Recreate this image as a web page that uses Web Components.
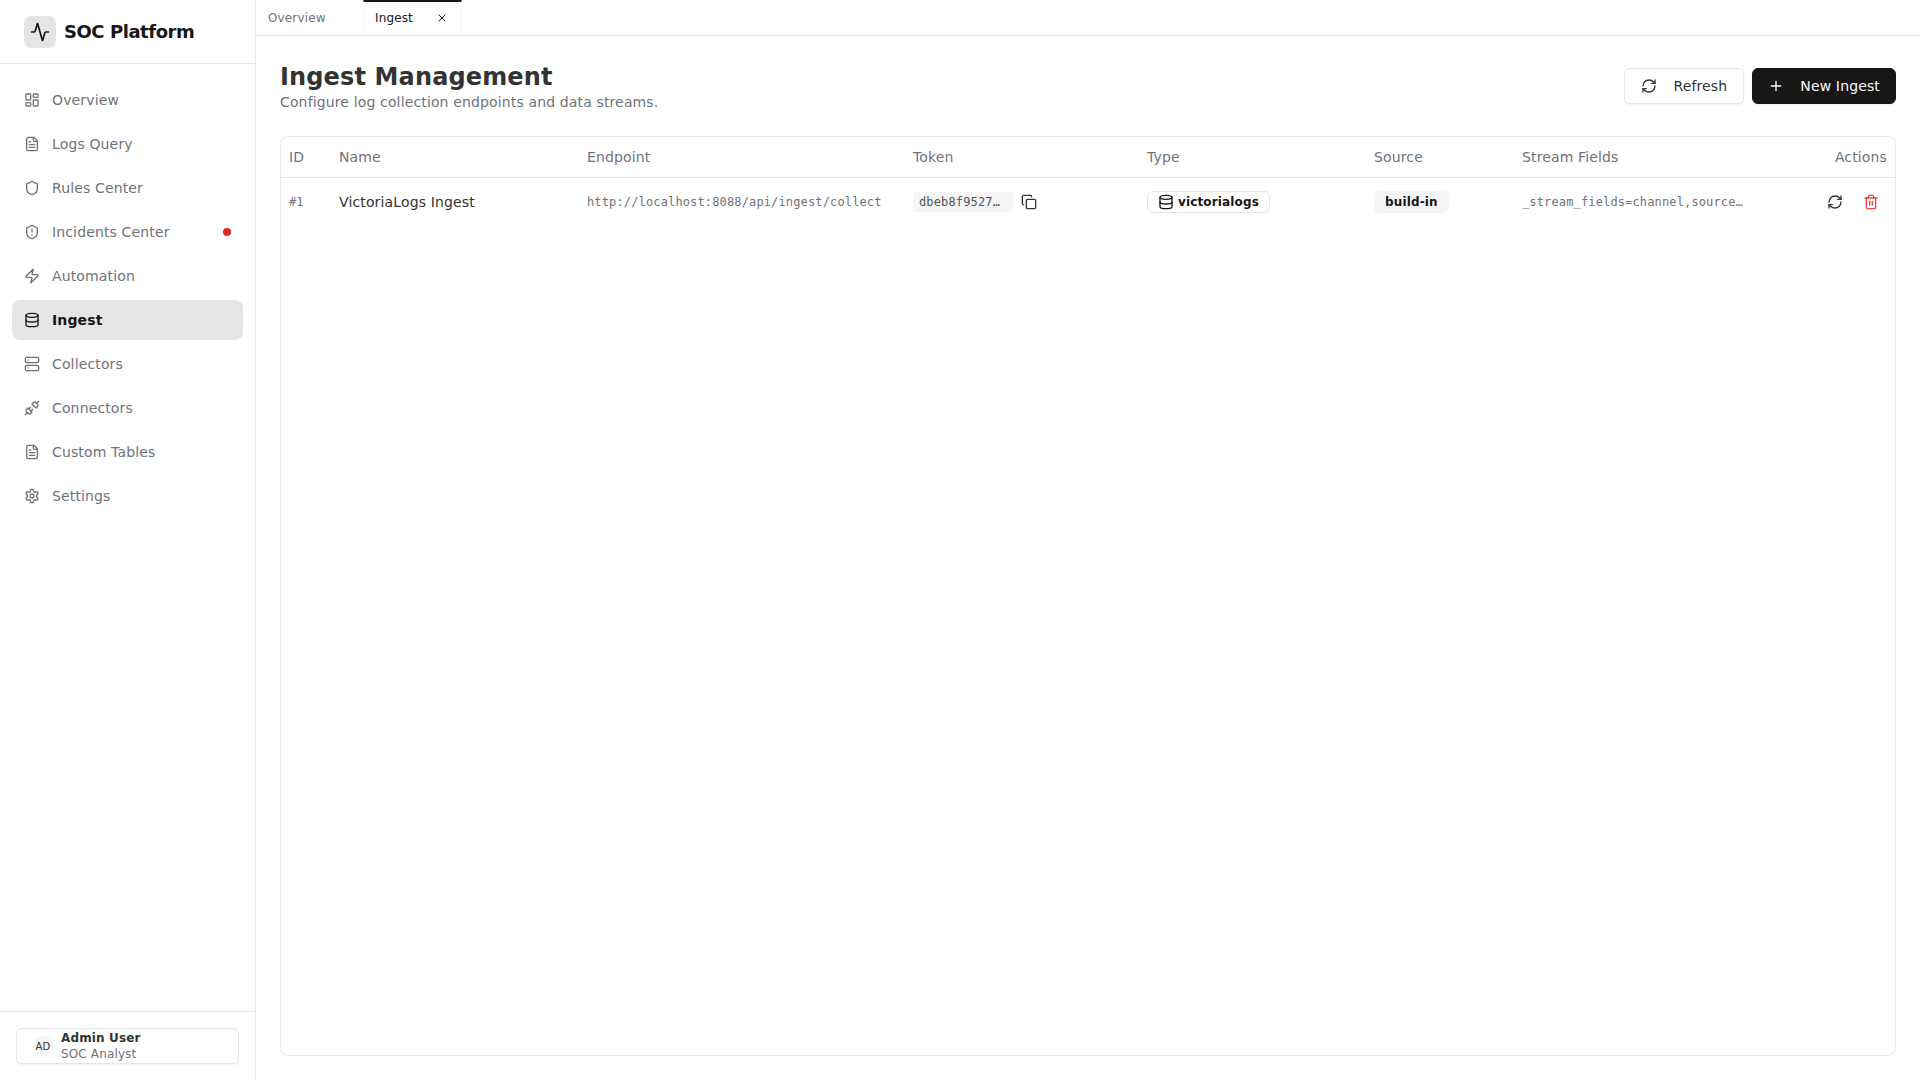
<!DOCTYPE html>
<html><head><meta charset="utf-8"><title>Ingest Management</title>
<style>
html,body{margin:0;height:100%;background:#fff;overflow:hidden}
body{font-family:"DejaVu Sans",sans-serif;color:#27272a;letter-spacing:.14px}
</style></head><body>
<soc-app>
  <soc-sidebar slot="side">
    <soc-nav-item icon="dashboard">Overview</soc-nav-item>
    <soc-nav-item icon="file">Logs Query</soc-nav-item>
    <soc-nav-item icon="shield">Rules Center</soc-nav-item>
    <soc-nav-item icon="shieldalert" dot>Incidents Center</soc-nav-item>
    <soc-nav-item icon="zap">Automation</soc-nav-item>
    <soc-nav-item icon="database" active>Ingest</soc-nav-item>
    <soc-nav-item icon="server">Collectors</soc-nav-item>
    <soc-nav-item icon="unplug">Connectors</soc-nav-item>
    <soc-nav-item icon="file">Custom Tables</soc-nav-item>
    <soc-nav-item icon="settings">Settings</soc-nav-item>
  </soc-sidebar>
  <soc-tabs slot="tabs"></soc-tabs>
  <soc-ingest-page></soc-ingest-page>
</soc-app>
<script>
const P={
activity:'<path d="M22 12h-2.48a2 2 0 0 0-1.93 1.46l-2.35 8.36a.25.25 0 0 1-.48 0L9.24 2.18a.25.25 0 0 0-.48 0l-2.35 8.36A2 2 0 0 1 4.49 12H2"/>',
dashboard:'<rect width="7" height="9" x="3" y="3" rx="1"/><rect width="7" height="5" x="14" y="3" rx="1"/><rect width="7" height="9" x="14" y="12" rx="1"/><rect width="7" height="5" x="3" y="16" rx="1"/>',
file:'<path d="M15 2H6a2 2 0 0 0-2 2v16a2 2 0 0 0 2 2h12a2 2 0 0 0 2-2V7Z"/><path d="M14 2v4a2 2 0 0 0 2 2h4"/><path d="M10 9H8"/><path d="M16 13H8"/><path d="M16 17H8"/>',
shield:'<path d="M20 13c0 5-3.5 7.5-7.66 8.95a1 1 0 0 1-.67-.01C7.5 20.5 4 18 4 13V6a1 1 0 0 1 1-1c2 0 4.5-1.2 6.24-2.72a1.17 1.17 0 0 1 1.52 0C14.51 3.81 17 5 19 5a1 1 0 0 1 1 1z"/>',
shieldalert:'<path d="M20 13c0 5-3.5 7.5-7.66 8.95a1 1 0 0 1-.67-.01C7.5 20.5 4 18 4 13V6a1 1 0 0 1 1-1c2 0 4.5-1.2 6.24-2.72a1.17 1.17 0 0 1 1.52 0C14.51 3.81 17 5 19 5a1 1 0 0 1 1 1z"/><path d="M12 8v4"/><path d="M12 16h.01"/>',
zap:'<path d="M4 14a1 1 0 0 1-.78-1.63l9.9-10.2a.5.5 0 0 1 .86.46l-1.92 6.02A1 1 0 0 0 13 10h7a1 1 0 0 1 .78 1.63l-9.9 10.2a.5.5 0 0 1-.86-.46l1.92-6.02A1 1 0 0 0 11 14z"/>',
database:'<ellipse cx="12" cy="5" rx="9" ry="3"/><path d="M3 5V19A9 3 0 0 0 21 19V5"/><path d="M3 12A9 3 0 0 0 21 12"/>',
server:'<rect width="20" height="8" x="2" y="2" rx="2"/><rect width="20" height="8" x="2" y="14" rx="2"/><path d="M6 6h.01"/><path d="M6 18h.01"/>',
unplug:'<path d="m19 5 3-3"/><path d="m2 22 3-3"/><path d="M6.3 20.3a2.4 2.4 0 0 0 3.4 0L12 18l-6-6-2.3 2.3a2.4 2.4 0 0 0 0 3.4Z"/><path d="M7.5 13.5 10 11"/><path d="M10.5 16.5 13 14"/><path d="m12 6 6 6 2.3-2.3a2.4 2.4 0 0 0 0-3.4l-2.6-2.6a2.4 2.4 0 0 0-3.4 0Z"/>',
settings:'<path d="M12.22 2h-.44a2 2 0 0 0-2 2v.18a2 2 0 0 1-1 1.73l-.43.25a2 2 0 0 1-2 0l-.15-.08a2 2 0 0 0-2.73.73l-.22.38a2 2 0 0 0 .73 2.73l.15.1a2 2 0 0 1 1 1.72v.51a2 2 0 0 1-1 1.74l-.15.09a2 2 0 0 0-.73 2.73l.22.38a2 2 0 0 0 2.73.73l.15-.08a2 2 0 0 1 2 0l.43.25a2 2 0 0 1 1 1.73V20a2 2 0 0 0 2 2h.44a2 2 0 0 0 2-2v-.18a2 2 0 0 1 1-1.73l.43-.25a2 2 0 0 1 2 0l.15.08a2 2 0 0 0 2.73-.73l.22-.39a2 2 0 0 0-.73-2.73l-.15-.08a2 2 0 0 1-1-1.74v-.5a2 2 0 0 1 1-1.74l.15-.09a2 2 0 0 0 .73-2.73l-.22-.38a2 2 0 0 0-2.73-.73l-.15.08a2 2 0 0 1-2 0l-.43-.25a2 2 0 0 1-1-1.73V4a2 2 0 0 0-2-2z"/><circle cx="12" cy="12" r="3"/>',
refresh:'<path d="M3 12a9 9 0 0 1 9-9 9.75 9.75 0 0 1 6.74 2.74L21 8"/><path d="M21 3v5h-5"/><path d="M21 12a9 9 0 0 1-9 9 9.75 9.75 0 0 1-6.74-2.74L3 16"/><path d="M8 16H3v5"/>',
copy:'<rect width="14" height="14" x="8" y="8" rx="2" ry="2"/><path d="M4 16c-1.1 0-2-.9-2-2V4c0-1.1.9-2 2-2h10c1.1 0 2 .9 2 2"/>',
trash:'<path d="M3 6h18"/><path d="M19 6v14c0 1-1 2-2 2H7c-1 0-2-1-2-2V6"/><path d="M8 6V4c0-1 1-2 2-2h4c1 0 2 1 2 2v2"/><line x1="10" x2="10" y1="11" y2="17"/><line x1="14" x2="14" y1="11" y2="17"/>',
plus:'<path d="M5 12h14"/><path d="M12 5v14"/>',
x:'<path d="M18 6 6 18"/><path d="m6 6 12 12"/>'
};
function def(name,css,html,init){
  customElements.define(name,class extends HTMLElement{
    constructor(){super();const r=this.attachShadow({mode:'open'});
      r.innerHTML='<style>'+css+'</style>'+(typeof html==='function'?html(this):html);}
    connectedCallback(){const r=this.shadowRoot; if(init)init(this,r);}
  });
}
def('soc-icon',':host{display:inline-flex;flex:none;width:var(--s,16px);height:var(--s,16px)}svg{width:100%;height:100%;display:block;fill:none;stroke:currentColor;stroke-width:2;stroke-linecap:round;stroke-linejoin:round}',
 '<svg viewBox="0 0 24 24"></svg>',(h,r)=>{r.querySelector('svg').innerHTML=P[h.getAttribute('name')]||'';});

def('soc-app',':host{display:flex;width:1920px;height:1080px}.side{flex:none;width:256px}.main{flex:1;min-width:0;display:flex;flex-direction:column}',
 '<div class="side"><slot name="side"></slot></div><div class="main"><slot name="tabs"></slot><slot></slot></div>');

def('soc-sidebar',`:host{display:flex;flex-direction:column;height:1080px;box-sizing:border-box;border-right:1px solid #e5e5e5;background:#fff}
.brand{height:64px;box-sizing:border-box;border-bottom:1px solid #e5e5e5;display:flex;align-items:center;gap:8px;padding:0 24px}
.logo{width:32px;height:32px;border-radius:8px;background:#e5e5e5;display:flex;align-items:center;justify-content:center;color:#171717;--s:20px}
.name{font-size:18px;font-weight:700;color:#171717;letter-spacing:-.45px}
nav{flex:1;display:flex;flex-direction:column;gap:4px;padding:16px 12px}
.foot{border-top:1px solid #e5e5e5;padding:16px;height:69px;box-sizing:border-box}`,
`<div class="brand"><div class="logo"><soc-icon name="activity"></soc-icon></div><div class="name">SOC Platform</div></div>
<nav><slot></slot></nav><div class="foot"><soc-user></soc-user></div>`);

def('soc-nav-item',`:host{display:flex;align-items:center;gap:12px;height:40px;padding:0 12px;border-radius:8px;font-size:14px;color:#71717a;position:relative}
:host([active]){background:#e5e5e5;color:#171717;font-weight:700}
.dot{position:absolute;right:12px;top:50%;margin-top:-4px;width:8px;height:8px;border-radius:50%;background:#dc2626;display:none}
:host([dot]) .dot{display:block}`,
 h=>`<soc-icon name="${h.getAttribute('icon')}"></soc-icon><span><slot></slot></span><i class="dot"></i>`);

def('soc-user',`:host{display:flex;align-items:center;gap:8px;height:36px;box-sizing:border-box;border:1px solid #e5e5e5;border-radius:6px;padding:0 16px;box-shadow:0 1px 2px rgba(0,0,0,.05);background:#fff}
.av{width:20px;height:20px;border-radius:50%;background:#f5f5f5;font-size:10px;color:#333;display:flex;align-items:center;justify-content:center;flex:none}
.t{line-height:16px;font-size:12px}.n{font-weight:700;color:#333}.r{color:#71717a}`,
 `<div class="av">AD</div><div class="t"><div class="n">Admin User</div><div class="r">SOC Analyst</div></div>`);

def('soc-tabs',`:host{display:flex;height:36px;box-sizing:border-box;border-bottom:1px solid #e5e5e5;font-size:12px;flex:none}
.tab{display:flex;align-items:center;box-sizing:border-box;height:35px}
.a{width:107px;padding-left:12px;color:#71717a}
.b{width:99px;padding:0 12px 0 11px;color:#171717;border-top:2px solid #171717;border-left:1px solid #f5f5f5;border-right:1px solid #f5f5f5;justify-content:space-between;--s:12px}
.b span{margin-top:-2px}.b soc-icon{margin-top:-2px;margin-right:1px}`,
 `<div class="tab a">Overview</div><div class="tab b"><span>Ingest</span><soc-icon name="x"></soc-icon></div>`);

def('soc-button',`:host{display:inline-flex;align-items:center;gap:16px;height:36px;box-sizing:border-box;padding:0 16px;border-radius:6px;font-size:14px;border:1px solid #e5e5e5;color:#333;background:#fff;box-shadow:0 1px 2px rgba(0,0,0,.05)}
:host([primary]){background:#171717;border-color:#171717;color:#fafafa;padding:0 15px}`,
 h=>`<soc-icon name="${h.getAttribute('icon')}"></soc-icon><span><slot></slot></span>`);

def('soc-badge',`:host{display:inline-flex;align-items:center;gap:4px;height:22px;box-sizing:border-box;padding:0 10px;border-radius:6px;font-size:12px;font-weight:700;color:#171717;border:1px solid transparent}
:host([outline]){border-color:#e5e5e5}:host([fill]){background:#f5f5f5}`,
 h=>(h.hasAttribute('icon')?`<soc-icon name="${h.getAttribute('icon')}"></soc-icon>`:'')+'<slot></slot>');

const COLS='50px 248px 326px 234px 227px 148px 1fr 120px';
def('soc-ingest-page',`:host{display:flex;flex-direction:column;flex:1;min-height:0;padding:24px;box-sizing:border-box;height:1044px}
.head{display:flex;justify-content:space-between;align-items:flex-start;height:52px;margin-bottom:24px}
.btns{display:flex;gap:8px;margin-top:8px}
h1{margin:0 0 -1px;padding-top:1px;font-size:24px;line-height:32px;font-weight:700;color:#333}
p{margin:0;font-size:14px;line-height:20px;color:#71717a}
.card{flex:1;border:1px solid #e5e5e5;border-radius:8px;overflow:hidden;font-size:14px}
.row{display:grid;grid-template-columns:${COLS};align-items:center}
.row>div{padding:0 8px;box-sizing:border-box;min-width:0;white-space:nowrap}
.th{height:41px;padding-bottom:1px;box-sizing:border-box;border-bottom:1px solid #e5e5e5;color:#71717a}
.tr{height:48px;color:#333}
.mono{font-family:"DejaVu Sans Mono",monospace;font-size:12px;color:#71717a}
.r{text-align:right}
.tok{display:flex;align-items:center;gap:8px}
code{font-family:"DejaVu Sans Mono",monospace;font-size:12px;background:#f5f5f5;border-radius:4px;padding:2px 6px;width:88px;display:block;color:#52525b;line-height:16px;white-space:nowrap}
.el{display:block;white-space:nowrap}
.acts{display:flex;justify-content:flex-end;gap:20px;padding-right:16px!important;color:#333}
.del{color:#ef4444}`,
`<div class="head"><div><h1>Ingest Management</h1><p>Configure log collection endpoints and data streams.</p></div>
<div class="btns"><soc-button icon="refresh">Refresh</soc-button><soc-button icon="plus" primary>New Ingest</soc-button></div></div>
<div class="card">
<div class="row th"><div>ID</div><div>Name</div><div>Endpoint</div><div>Token</div><div>Type</div><div>Source</div><div>Stream Fields</div><div class="r">Actions</div></div>
<div class="row tr"><div class="mono">#1</div><div>VictoriaLogs Ingest</div><div class="mono">http://localhost:8088/api/ingest/collect</div>
<div class="tok"><code>dbeb8f9527…</code><soc-icon name="copy"></soc-icon></div>
<div><soc-badge outline icon="database">victorialogs</soc-badge></div><div><soc-badge fill>build-in</soc-badge></div>
<div class="mono"><span class="el">_stream_fields=channel,source…</span></div>
<div class="acts"><soc-icon name="refresh"></soc-icon><soc-icon name="trash" class="del"></soc-icon></div></div>
</div>`);
</script>
</body></html>
